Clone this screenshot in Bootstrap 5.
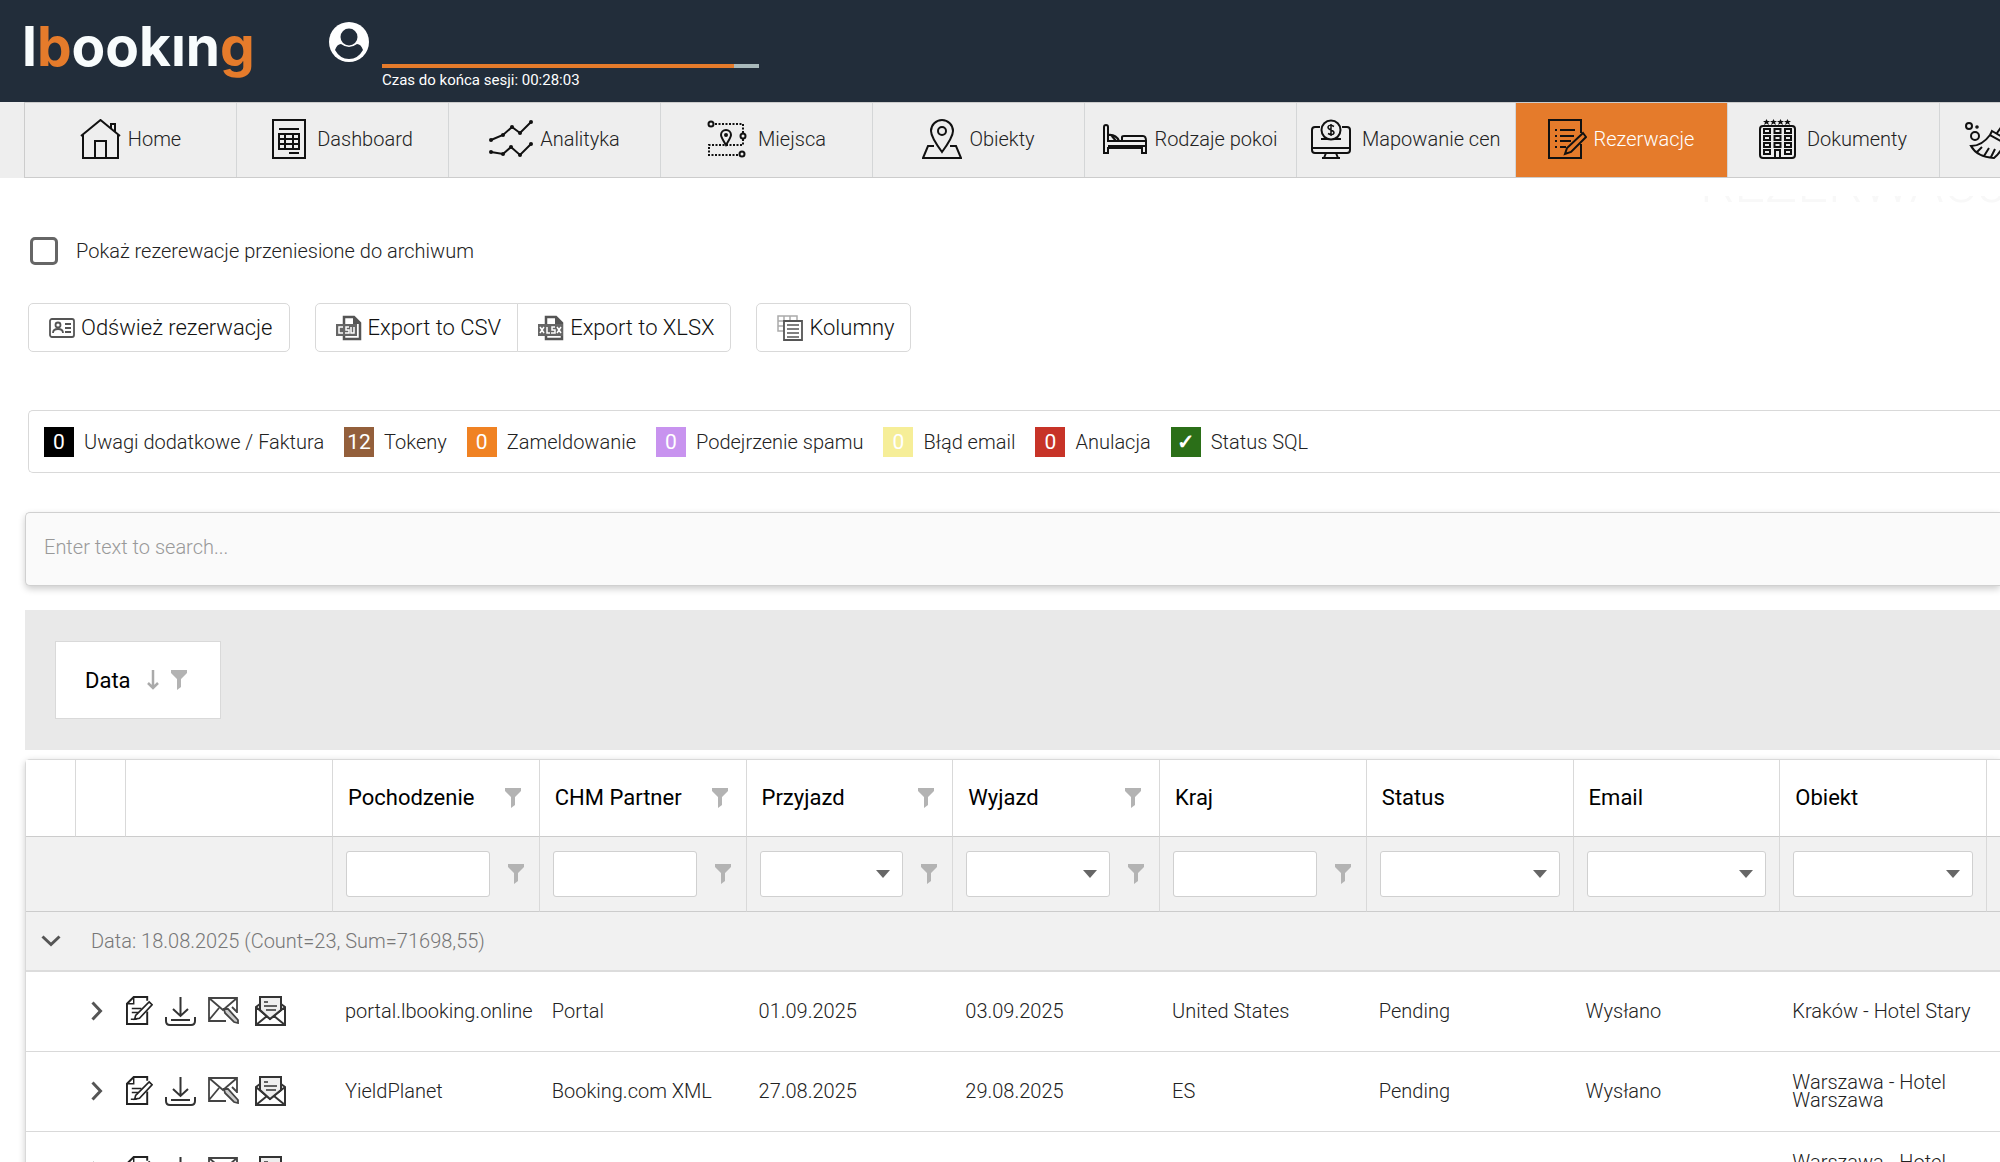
<!DOCTYPE html>
<html lang="pl">
<head>
<meta charset="utf-8">
<meta name="viewport" content="width=device-width, initial-scale=1">
<title>lbooking – Rezerwacje</title>
<link href="https://cdn.jsdelivr.net/npm/bootstrap@5.3.0/dist/css/bootstrap.min.css" rel="stylesheet">
<style>
  :root { --line: #d9d9d9; --brand: #e57b2b; --navy: #222d3a; }
  body { font-family: Roboto, "Liberation Sans", sans-serif; font-size: 20px; font-weight: 300; line-height: 24px; color: #222; background: #fff; overflow: hidden; }
  svg { flex: none; display: block; }
  .ico { fill: none; stroke: #111; stroke-width: 2; }

  .topbar { background: var(--navy); height: 102px; padding: 16px 22px; }
  .logo-text { font: 700 55px/60px Inter, sans-serif; color: #f8fcfd; text-decoration: none; width: 307px; }
  .logo-text span { color: var(--brand); }
  .account { margin-top: 6px; }
  .session { width: 377px; margin: 48px 0 0 13px; font-size: 15px; line-height: 20px; font-weight: 400; color: #fff; }
  .session .progress { height: 4px; border-radius: 0; background: #a9b9bb; margin-bottom: 2px; }
  .session .progress-bar { background: var(--brand); }

  .mainnav { background: #eee; height: 76px; padding-left: 24px; }
  .mainnav ul { border: solid #ccc; border-width: 1px 0 1px 1px; height: 76px; }
  .mainnav li { flex: none; min-width: 212px; border-right: 1px solid #d4d6d7; }
  .mainnav a { padding: 0 14px 2px; gap: 7px; color: #222; height: 100%; font-size: 20px; border-radius: 0; }
  .mainnav a.active { background: var(--brand); color: #fff; }

  .page-title { height: 9px; margin: 18px 0 0 85%; overflow: hidden; display: flex; align-items: flex-end; font-size: 54px; font-weight: 300; line-height: 42px; color: #f8f8f8; white-space: nowrap; }
  .content { padding-left: 25px; width: 100%; }

  .archive { height: 28px; margin: 32px 0 0 5px; }
  .archive input { width: 28px; height: 28px; margin: 0 18px 0 0; border: 3px solid #666; border-radius: 3px; }

  .toolbar { margin: 38px 0 0 3px; gap: 25px; }
  .toolbar .btn { height: 49px; font-size: 22px; font-weight: 300; line-height: 24px; color: #111; border: 1px solid var(--line); background: #fff; padding: 0 16px 0 20px; display: flex; align-items: center; gap: 6px; border-radius: 5px; }
  .toolbar .btn-group .btn:first-child { border-radius: 5px 0 0 5px; }
  .toolbar .btn-group .btn:last-child { border-radius: 0 5px 5px 0; }

  .legend-bar { margin: 58px 0 0 3px; height: 63px; border: 1px solid var(--line); border-right: 0; border-radius: 5px 0 0 5px; padding-left: 15px; gap: 20px; white-space: nowrap; }
  .legend-bar > div { gap: 10px; }
  .tag { width: 30px; height: 30px; color: #fff; font-weight: 400; font-size: 21px; line-height: 31px; text-align: center; }

  .search { margin-top: 39px; height: 74px; font-size: 20px; font-weight: 300; padding: 0 18px 4px; border: 1px solid #d0d0d0; border-right: 0; border-radius: 5px 0 0 5px; background: #fafafa; box-shadow: 0 3px 7px rgba(0,0,0,.2); }
  .search::placeholder { color: #999; }

  .group-panel { margin-top: 24px; background: #e9e9e9; height: 140px; padding-left: 30px; }
  .chip { height: 78px; width: 166px; background: #fff; border: 1px solid var(--line); color: #000; font-size: 22px; font-weight: 400; padding: 0 0 0 29px; border-radius: 0; gap: 8px; }
  .chip span { margin-right: 8px; }

  .grid-wrap { margin-top: 9px; border: 1px solid var(--line); border-right: 0; border-radius: 5px 0 0 0; box-shadow: 0 2px 7px rgba(0,0,0,.2); }
  .grid { table-layout: fixed; width: 2168px; margin: 0; border-collapse: separate; border-spacing: 0; }
  .grid th, .grid td { padding: 0 0 0 12px; vertical-align: middle; border-bottom: 1px solid var(--line); line-height: 18px; font-weight: 300; }
  .grid thead th { height: 77px; border-right: 1px solid var(--line); border-bottom: 1px solid #ccc; background: #fff; color: #000; font-size: 22px; font-weight: 400; padding: 0 18px 0 15px; }
  .grid .filters td { height: 75px; background: #f1f1f1; border-right: 1px solid var(--line); border-bottom: 1px solid #ccc; padding: 0 13px; }
  .grid .filters .f { gap: 18px; padding-right: 2px; }
  .grid .filters input, .grid .filters select { flex: 1 1 0; min-width: 0; height: 46px; border: 1px solid #d0d0d0; border-radius: 3px; background-color: #fff; box-shadow: none; }
  .grid .filters select { background-image: url("data:image/svg+xml,%3Csvg xmlns='http://www.w3.org/2000/svg' viewBox='0 0 14 8'%3E%3Cpath d='M0 0h14L7 8z' fill='%23666'/%3E%3C/svg%3E"); background-size: 14px 8px; background-position: right 12px center; }
  .grid .group td { height: 60px; background: #f1f1f1; color: #777; border-bottom: 2px solid #dcdcdc; }
  .grid .group td:first-child { padding-left: 15px; }
  .grid .group td:nth-child(2) { padding-left: 15px; }
  .grid .row-item td { height: 80px; background: #fff; padding-bottom: 2px; }
  .grid .row-item td:nth-child(2) { padding-left: 15px; }
  .grid .row-item .acts { padding-left: 0; }
  .acts div { gap: 12px; }
  .acts button, .plain { border: 0; background: none; padding: 0; }
</style>
</head>
<body>
<svg width="0" height="0" class="position-absolute" aria-hidden="true">
  <defs>
    <symbol id="funnel" viewBox="0 0 16 20"><path d="M0 0h16v3L10 9v8l-4 3V9L0 3z" fill="#b3b3b3"/></symbol>
    <symbol id="edit" viewBox="0 0 28 30"><g fill="none" stroke="#222" stroke-width="2"><path d="M22 5V1H8L1 8v21h21V16"/><path d="M1 8h7V1" stroke-width="1.5"/><path d="M6 13h10M6 17h7M5 24h6" stroke-width="1.5"/><path d="M24 6l3 3L14 23l-5 1 1-4z" stroke-width="1.7" fill="#fff"/></g></symbol>
    <symbol id="down" viewBox="0 0 31 30"><g fill="none" stroke="#333" stroke-width="2"><path d="M15.500 1v19M8 13l7.500 7 7.500-7M6 24h19"/><path d="M1 21v4q0 4 4 4h21q4 0 4-4v-4"/></g></symbol>
    <symbol id="mail" viewBox="0 0 31 27"><g fill="none" stroke="#444" stroke-width="1.800"><path d="M18 24H1V1h28v15M1 1l14 12L29 1M1 23l10-12M29 15l-5-5"/><path d="M16 12l4 0 10 11v3l-4-1-9-9z" fill="#ccc"/></g></symbol>
    <symbol id="open" viewBox="0 0 31 30"><g fill="none" stroke="#333" stroke-width="2"><path d="M5 8L1 11v18h29V11l-4-3M1 11l14 12 15-12M1 29l11-9M30 29l-11-9"/><path d="M5 14V1h21v13l-11 9z" fill="#eee"/><path d="M9 6h4M9 10h13M11 14h10" stroke-width="1.700"/></g></symbol>
    <symbol id="chev" viewBox="0 0 12 20"><path d="M1.500 1.500L9.500 10l-8 8.500" fill="none" stroke="#555" stroke-width="3"/></symbol>
  </defs>
</svg>

<header class="topbar d-flex align-items-start">
  <a class="logo-text" href="#">l<span>b</span>ookın<span>g</span></a>
  <button class="plain account" aria-label="Konto" type="button">
    <svg width="40" height="40" viewBox="0 0 40 40"><circle cx="20" cy="20" r="20" fill="#fff"/><circle cx="20" cy="15" r="8.500" fill="#222d3a"/><path d="M6 28q2-6 6-6 8 6 16 0 4 0 6 6-5 9-14 9T6 28z" fill="#222d3a"/></svg>
  </button>
  <div class="session">
    <div class="progress"><div class="progress-bar" style="width:93.500%"></div></div>
    Czas do końca sesji: 00:28:03
  </div>
</header>

<nav class="mainnav overflow-hidden">
  <ul class="nav flex-nowrap">
    <li><a class="nav-link d-flex align-items-center justify-content-center" href="#">
      <svg class="ico" width="41" height="40" viewBox="0 0 41 40"><path d="M1 17L20.500 1 40 17M3 16v23h35V16M15 39V22h11v17M31 9V5h4v8"/></svg>Home</a></li>
    <li><a class="nav-link d-flex align-items-center justify-content-center" href="#">
      <svg class="ico me-1" width="34" height="40" viewBox="0 0 34 40"><path d="M1 1h32v38H1zM7 10h20M7 15h20v15H7zM7 20h20M7 25h20M13 15v15M21 15v15M17 34h10"/></svg>Dashboard</a></li>
    <li><a class="nav-link d-flex align-items-center justify-content-center" href="#">
      <svg class="ico" width="44" height="38" viewBox="0 0 44 38"><path d="M2 20l12-5 9-8 8 6L42 2M2 32l12 2 8-7 9 8 11-11"/><g fill="#111" stroke="none"><circle cx="2" cy="20" r="2"/><circle cx="14" cy="15" r="2"/><circle cx="23" cy="7" r="2"/><circle cx="31" cy="13" r="2"/><circle cx="42" cy="2" r="2"/><circle cx="2" cy="32" r="2"/><circle cx="14" cy="34" r="2"/><circle cx="22" cy="27" r="2"/><circle cx="31" cy="35" r="2"/><circle cx="42" cy="24" r="2"/></g></svg>Analityka</a></li>
    <li><a class="nav-link d-flex align-items-center justify-content-center" href="#">
      <svg class="ico me-1" width="40" height="38" viewBox="0 0 40 38"><g stroke-dasharray="2 1.500"><path d="M8 4h28v9M36 19v6H2v10h30"/></g><circle cx="4" cy="4" r="2.500"/><circle cx="36" cy="16" r="2.500"/><circle cx="35" cy="34" r="2.500"/><path d="M19 25q-5-8-5-10a5 5 0 0 1 10 0q0 2-5 10z"/><circle cx="19" cy="15" r="1"/></svg>Miejsca</a></li>
    <li><a class="nav-link d-flex align-items-center justify-content-center" href="#">
      <svg class="ico" width="40" height="40" viewBox="0 0 40 40"><path d="M20 33Q9 18 9 12a11 11 0 0 1 22 0q0 6-11 21zM12 27H6L1 39h38l-5-12h-6"/><circle cx="20" cy="12" r="4"/></svg>Obiekty</a></li>
    <li><a class="nav-link d-flex align-items-center justify-content-center" href="#">
      <svg class="ico" width="44" height="30" viewBox="0 0 44 30"><path d="M1 29V3q0-2 2-2t2 2v14h38v12h-4v-5H5v5zM5 22h38M19 17v-4q0-1 2-1h19q3 0 3 5M5 17v-6q8-1 11 6M8 11l5 6"/></svg>Rodzaje pokoi</a></li>
    <li><a class="nav-link d-flex align-items-center justify-content-center" href="#">
      <svg class="ico me-1" width="40" height="40" viewBox="0 0 40 40"><path d="M9 8H4Q1 8 1 11v20q0 3 3 3h32q3 0 3-3V11q0-3-3-3h-5M1 29h38M15 34l-2 5M25 34l2 5M11 39h18M10 20h20" /><circle cx="20" cy="11" r="9.500" fill="#eee"/><path d="M23 7.500q-5-2.500-6 .5 0 2 3 3t3 3q-1 3-6 .5M20 5v12" stroke-width="1.500"/></svg>Mapowanie cen</a></li>
    <li><a class="nav-link active d-flex align-items-center justify-content-center" aria-current="page" href="#">
      <svg class="ico" width="39" height="40" viewBox="0 0 39 40"><path d="M33 14V1H1v38h32V25M7 11h2M12 11h15M7 17h2M12 17h14M7 22h2M12 22h11M7 28h2M12 28h6"/><path d="M35 14l3 4-15 15-6 2 2-6z" fill="#e57b2b"/></svg>Rezerwacje</a></li>
    <li><a class="nav-link d-flex align-items-center justify-content-center" href="#">
      <svg class="ico me-1" width="37" height="40" viewBox="0 0 37 40"><rect x="1" y="7" width="35" height="32" rx="3"/><g fill="#111" stroke="none"><path id="s" d="M7.500 0l1 2H11L9 3.500 10 6 7.500 4.500 5 6 6 3.500 4 2h2.500z"/><use href="#s" x="7"/><use href="#s" x="14"/><use href="#s" x="21"/></g><g id="w"><path d="M5 10h6v4H5zM15.500 10h6v4h-6zM26 10h6v4h-6z"/></g><use href="#w" y="7"/><use href="#w" y="14"/><path d="M5 31h6v4H5zM26 31h6v4h-6zM16 39v-8h5v8"/></svg>Dokumenty</a></li>
    <li><a class="nav-link d-flex align-items-center ps-4" href="#" aria-label="Sprzątanie">
      <svg class="ico" width="50" height="42" viewBox="0 0 50 42"><circle cx="5" cy="8" r="3"/><circle cx="11" cy="18" r="4"/><circle cx="13" cy="9" r=".8"/><path d="M28 13l14 8-2 4-14-8zM33 15l10-14 4 3-8 15M26 17Q18 28 7 28q6 11 23 12 8-7 10-15M13 34l5-5M20 38l5-8M27 39l4-8"/></svg></a></li>
  </ul>
</nav>

<h1 class="page-title">REZERWACJE</h1>

<main class="content">
  <div class="archive d-flex align-items-center">
    <input class="form-check-input" type="checkbox" id="arch"><label for="arch">Pokaż rezerewacje przeniesione do archiwum</label>
  </div>

  <div class="toolbar d-flex">
    <button class="btn" type="button"><svg width="26" height="20" viewBox="0 0 26 20" fill="none" stroke="#555" stroke-width="1.800"><rect x="1" y="1" width="24" height="18" rx="2"/><circle cx="9" cy="7" r="2.500"/><path d="M4 15q0-4 5-4t5 4M16 6h6M16 10h6M16 14h6"/></svg>Odśwież rezerwacje</button>
    <div class="btn-group">
      <button class="btn" type="button"><svg width="26" height="26" viewBox="0 0 26 26"><path d="M8 9V2h10l6 6v16H8v-3" fill="none" stroke="#555" stroke-width="2.500"/><path d="M17 1v8h8z" fill="#555"/><path d="M0 9h21v12H0z" fill="#666"/><path d="M7 12H3v6h4M13 12h-3v3h3v3h-4M15 12v6h3v-6" fill="none" stroke="#fff" stroke-width="1.500"/></svg>Export to CSV</button>
      <button class="btn" type="button"><svg width="26" height="26" viewBox="0 0 26 26"><path d="M8 9V2h10l6 6v16H8v-3" fill="none" stroke="#555" stroke-width="2.500"/><path d="M17 1v8h8z" fill="#555"/><path d="M0 9h25v12H0z" fill="#666"/><path d="M2 12l4 6M6 12l-4 6M9 12v6h3M17 12h-3v3h3v3h-4M19 12l4 6M23 12l-4 6" fill="none" stroke="#fff" stroke-width="1.500"/></svg>Export to XLSX</button>
    </div>
    <button class="btn" type="button"><svg width="26" height="26" viewBox="0 0 26 26" fill="none"><path d="M1 1h19v15H1zM1 6h19M1 11h19M7 1v15M13 1v15" stroke="#aaa" stroke-width="1.500"/><path d="M7 6h18v19H7z" fill="#fff" stroke="#555" stroke-width="1.800"/><path d="M10 10h12M10 14h12M10 18h12M10 22h12" stroke="#555" stroke-width="1.500"/></svg>Kolumny</button>
  </div>

  <div class="legend-bar d-flex align-items-center">
    <div class="d-flex align-items-center"><span class="tag" style="background:#000">0</span>Uwagi dodatkowe / Faktura</div>
    <div class="d-flex align-items-center"><span class="tag" style="background:#935f3b">12</span>Tokeny</div>
    <div class="d-flex align-items-center"><span class="tag" style="background:#f08223">0</span>Zameldowanie</div>
    <div class="d-flex align-items-center"><span class="tag" style="background:#c893ef">0</span>Podejrzenie spamu</div>
    <div class="d-flex align-items-center"><span class="tag" style="background:#f6ee98">0</span>Błąd email</div>
    <div class="d-flex align-items-center"><span class="tag" style="background:#c73328">0</span>Anulacja</div>
    <div class="d-flex align-items-center"><span class="tag fw-bold" style="background:#2b6f18">✓</span>Status SQL</div>
  </div>

  <input class="form-control search" type="text" placeholder="Enter text to search..." aria-label="Enter text to search">

  <div class="group-panel d-flex align-items-center">
    <button class="btn chip d-flex align-items-center" type="button"><span>Data</span>
      <svg width="12" height="20" viewBox="0 0 12 20" fill="none" stroke="#aaa" stroke-width="2.500"><path d="M6 0v18M1 13l5 5 5-5"/></svg>
      <svg class="ms-1" width="16" height="20"><use href="#funnel"/></svg></button>
  </div>

  <div class="grid-wrap">
    <table class="grid">
      <colgroup><col style="width:50px"><col style="width:50px"><col style="width:207px"><col><col><col><col><col><col><col><col><col></colgroup>
      <thead>
        <tr>
          <th></th><th></th><th></th>
          <th><div class="d-flex justify-content-between align-items-center">Pochodzenie<svg width="16" height="20"><use href="#funnel"/></svg></div></th>
          <th><div class="d-flex justify-content-between align-items-center">CHM Partner<svg width="16" height="20"><use href="#funnel"/></svg></div></th>
          <th><div class="d-flex justify-content-between align-items-center">Przyjazd<svg width="16" height="20"><use href="#funnel"/></svg></div></th>
          <th><div class="d-flex justify-content-between align-items-center">Wyjazd<svg width="16" height="20"><use href="#funnel"/></svg></div></th>
          <th>Kraj</th><th>Status</th><th>Email</th><th>Obiekt</th><th></th>
        </tr>
      </thead>
      <tbody>
        <tr class="filters">
          <td colspan="3"></td>
          <td><div class="f d-flex align-items-center"><input class="form-control" aria-label="Pochodzenie"><svg width="16" height="20"><use href="#funnel"/></svg></div></td>
          <td><div class="f d-flex align-items-center"><input class="form-control" aria-label="CHM Partner"><svg width="16" height="20"><use href="#funnel"/></svg></div></td>
          <td><div class="f d-flex align-items-center"><select class="form-select" aria-label="Przyjazd"><option></option></select><svg width="16" height="20"><use href="#funnel"/></svg></div></td>
          <td><div class="f d-flex align-items-center"><select class="form-select" aria-label="Wyjazd"><option></option></select><svg width="16" height="20"><use href="#funnel"/></svg></div></td>
          <td><div class="f d-flex align-items-center"><input class="form-control" aria-label="Kraj"><svg width="16" height="20"><use href="#funnel"/></svg></div></td>
          <td><div class="d-flex"><select class="form-select" aria-label="Status"><option></option></select></div></td>
          <td><div class="d-flex"><select class="form-select" aria-label="Email"><option></option></select></div></td>
          <td><div class="d-flex"><select class="form-select" aria-label="Obiekt"><option></option></select></div></td>
          <td></td>
        </tr>
        <tr class="group">
          <td><button class="plain d-block" type="button" aria-label="Zwiń"><svg width="20" height="12" viewBox="0 0 20 12"><path d="M1.500 1.500L10 9.500l8.500-8" fill="none" stroke="#555" stroke-width="3"/></svg></button></td>
          <td colspan="11">Data: 18.08.2025 (Count=23, Sum=71698,55)</td>
        </tr>
        <tr class="row-item">
          <td></td>
          <td><button class="plain d-block" type="button" aria-label="Rozwiń"><svg width="12" height="20"><use href="#chev"/></svg></button></td>
          <td class="acts"><div class="d-flex align-items-center"><button type="button" aria-label="Edytuj"><svg width="27" height="29"><use href="#edit"/></svg></button><button type="button" aria-label="Pobierz"><svg width="31" height="30"><use href="#down"/></svg></button><button type="button" aria-label="Napisz"><svg width="31" height="27"><use href="#mail"/></svg></button><button class="ms-1" type="button" aria-label="Wiadomość"><svg width="31" height="30"><use href="#open"/></svg></button></div></td>
          <td>portal.lbooking.online</td><td>Portal</td><td>01.09.2025</td><td>03.09.2025</td><td>United States</td><td>Pending</td><td>Wysłano</td><td>Kraków - Hotel Stary</td><td></td>
        </tr>
        <tr class="row-item">
          <td></td>
          <td><button class="plain d-block" type="button" aria-label="Rozwiń"><svg width="12" height="20"><use href="#chev"/></svg></button></td>
          <td class="acts"><div class="d-flex align-items-center"><button type="button" aria-label="Edytuj"><svg width="27" height="29"><use href="#edit"/></svg></button><button type="button" aria-label="Pobierz"><svg width="31" height="30"><use href="#down"/></svg></button><button type="button" aria-label="Napisz"><svg width="31" height="27"><use href="#mail"/></svg></button><button class="ms-1" type="button" aria-label="Wiadomość"><svg width="31" height="30"><use href="#open"/></svg></button></div></td>
          <td>YieldPlanet</td><td>Booking.com XML</td><td>27.08.2025</td><td>29.08.2025</td><td>ES</td><td>Pending</td><td>Wysłano</td><td>Warszawa - Hotel Warszawa</td><td></td>
        </tr>
        <tr class="row-item">
          <td></td>
          <td><button class="plain d-block" type="button" aria-label="Rozwiń"><svg width="12" height="20"><use href="#chev"/></svg></button></td>
          <td class="acts"><div class="d-flex align-items-center"><button type="button" aria-label="Edytuj"><svg width="27" height="29"><use href="#edit"/></svg></button><button type="button" aria-label="Pobierz"><svg width="31" height="30"><use href="#down"/></svg></button><button type="button" aria-label="Napisz"><svg width="31" height="27"><use href="#mail"/></svg></button><button class="ms-1" type="button" aria-label="Wiadomość"><svg width="31" height="30"><use href="#open"/></svg></button></div></td>
          <td></td><td></td><td></td><td></td><td></td><td></td><td></td><td>Warszawa - Hotel Warszawa</td><td></td>
        </tr>
      </tbody>
    </table>
  </div>
</main>
<script src="https://cdn.jsdelivr.net/npm/bootstrap@5.3.0/dist/js/bootstrap.bundle.min.js"></script>
</body>
</html>
